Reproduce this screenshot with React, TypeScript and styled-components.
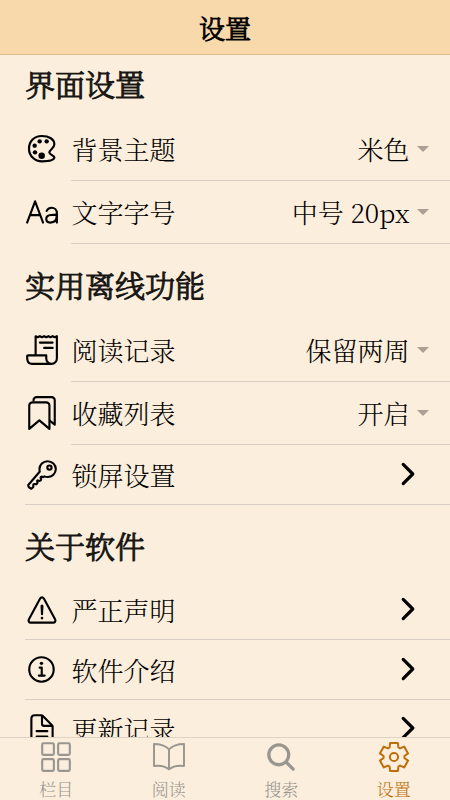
import React from "react";
import styled, { createGlobalStyle } from "styled-components";
import {
  IoTextOutline, IoReceiptOutline, IoBookmarksOutline, IoKeyOutline,
  IoWarningOutline, IoInformationCircleOutline, IoDocumentTextOutline, IoChevronForward,
  IoGridOutline, IoSearch,
} from "react-icons/io5";

const GlobalStyle = createGlobalStyle`
  * { box-sizing: border-box; }
  body { margin: 0; background: #fceedc; }
`;
const Screen = styled.div`
  display: flex;
  flex-direction: column;
  height: 800px;
  overflow: hidden;
  background: #fceedc;
  color: #000;
  font-family: "Noto Serif CJK SC", "Noto Sans CJK SC", serif;
  font-weight: 300;
`;
const Header = styled.header`
  flex: 0 0 55px;
  padding-top: 3px;
  background: #f8d9ac;
  border-bottom: 1px solid #dcbb8c;
  text-align: center;
  font-size: 26px;
  line-height: 50px;
  -webkit-text-stroke: 0.9px currentColor;
`;
const Content = styled.main`
  flex: 1;
  min-height: 0;
  overflow: hidden;
`;
const Heading = styled.h2<{ $h: number }>`
  margin: 0;
  height: ${(p) => p.$h}px;
  padding: 0 0 11px 25px;
  display: flex;
  align-items: flex-end;
  font-size: 30px;
  line-height: 48px;
  font-weight: 300;
  -webkit-text-stroke: 1px currentColor;
  color: #171614;
`;
const Row = styled.div<{ $h: number }>`
  display: flex;
  height: ${(p) => p.$h}px;
  padding-left: 25px;
`;
const IconCell = styled.div`
  flex: 0 0 46px;
  display: flex;
  align-items: center;
  svg { width: 34px; height: 34px; display: block; }
`;
const RowBody = styled.div`
  flex: 1;
  display: flex;
  align-items: center;
  justify-content: space-between;
  padding: 0 21.5px 0 0.5px;
  font-size: 26px;
  line-height: 38px;
`;
const Line = styled.div<{ $inset: number }>`
  height: 1px;
  margin-left: ${(p) => p.$inset}px;
  background: #d8cfc9;
`;
const Value = styled.div`
  display: flex;
  align-items: center;
  white-space: pre;
`;
const Caret = styled.i`
  margin: 0 0 1px 7px;
  border: 6px solid transparent;
  border-top-color: #aaa093;
  border-bottom: 0;
`;
const Chevron = styled(IoChevronForward)`
  width: 34px;
  height: 34px;
  margin: 0 3.5px 1px 0;
`;
const TabBar = styled.nav`
  flex: 0 0 63px;
  display: grid;
  grid-template-columns: repeat(4, 1fr);
  grid-template-rows: 62px;
  border-top: 1px solid #ddd2c4;
`;
const Tab = styled.div<{ $active?: boolean }>`
  display: flex;
  flex-direction: column;
  align-items: center;
  padding-top: 2px;
  color: ${(p) => (p.$active ? "#bd6e0a" : "#999690")};
  font-size: 17px;
  line-height: 30px;
  svg { width: 34px; height: 34px; flex: none; }
`;

const PaletteIcon = () => (
  <svg viewBox="15 21 102 102">
    <path
      d="M65 33C43 33 27 49 27 71C27 93 45 109 66 109C84 109 103 106 103 97C103 90 88 91 88 82C88 74 103 72 103 58C103 43 88 33 65 33Z"
      fill="none" stroke="currentColor" strokeWidth="6.6" strokeLinejoin="round"
    />
    <circle cx="59" cy="49" r="6.6" />
    <circle cx="80" cy="49" r="6.6" />
    <circle cx="44" cy="62" r="6.6" />
    <circle cx="45" cy="82" r="6.6" />
    <circle cx="65" cy="92" r="9.8" />
  </svg>
);

const BookIcon = () => (
  <svg viewBox="0 0 102 102" fill="none" stroke="currentColor" strokeWidth="5.8" strokeLinejoin="round">
    <path d="M51 28C40 17 23 12 6 12V78C23 76 39 78 51 88C63 78 79 76 96 78V12C79 12 62 17 51 28V88" />
  </svg>
);

const toothShape = [[-4.4, -9.5], [-3.9, -14], [3.9, -14], [4.4, -9.5]];
const gearPoints = Array.from({ length: 6 }, (_, i) => {
  const a = (i * Math.PI) / 3;
  return toothShape
    .map(([x, y]) => `${x * Math.cos(a) - y * Math.sin(a)},${x * Math.sin(a) + y * Math.cos(a)}`)
    .join(" ");
}).join(" ");
const GearIcon = () => (
  <svg viewBox="-17 -17 34 34" fill="none" stroke="currentColor" strokeWidth="2" strokeLinejoin="round">
    <polygon points={gearPoints} />
    <circle r="4.1" />
  </svg>
);

type Item = { icon: React.ReactNode; label: string; value?: string; h: number; inset: number };
type Section = { title: string; h: number; items: Item[] };

const sections: Section[] = [
  { title: "界面设置", h: 63, items: [
    { icon: <PaletteIcon />, label: "背景主题", value: "米色", h: 62, inset: 71 },
    { icon: <IoTextOutline />, label: "文字字号", value: "中号 20px", h: 62, inset: 71 },
  ] },
  { title: "实用离线功能", h: 75, items: [
    { icon: <IoReceiptOutline />, label: "阅读记录", value: "保留两周", h: 62, inset: 71 },
    { icon: <IoBookmarksOutline />, label: "收藏列表", value: "开启", h: 62, inset: 71 },
    { icon: <IoKeyOutline />, label: "锁屏设置", h: 59, inset: 25 },
  ] },
  { title: "关于软件", h: 75, items: [
    { icon: <IoWarningOutline />, label: "严正声明", h: 59, inset: 25 },
    { icon: <IoInformationCircleOutline />, label: "软件介绍", h: 59, inset: 25 },
    { icon: <IoDocumentTextOutline />, label: "更新记录", h: 57, inset: 25 },
  ] },
];

export default function App() {
  return (
    <Screen>
      <GlobalStyle />
      <Header>设置</Header>
      <Content>
        {sections.map((s) => (
          <section key={s.title}>
            <Heading $h={s.h}>{s.title}</Heading>
            {s.items.map((it) => (
              <React.Fragment key={it.label}>
                <Row $h={it.h}>
                  <IconCell>{it.icon}</IconCell>
                  <RowBody>
                    <span>{it.label}</span>
                    {it.value ? <Value><span>{it.value}</span><Caret /></Value> : <Chevron />}
                  </RowBody>
                </Row>
                <Line $inset={it.inset} />
              </React.Fragment>
            ))}
          </section>
        ))}
      </Content>
      <TabBar>
        <Tab><IoGridOutline />栏目</Tab>
        <Tab><BookIcon />阅读</Tab>
        <Tab><IoSearch />搜索</Tab>
        <Tab $active><GearIcon />设置</Tab>
      </TabBar>
    </Screen>
  );
}
